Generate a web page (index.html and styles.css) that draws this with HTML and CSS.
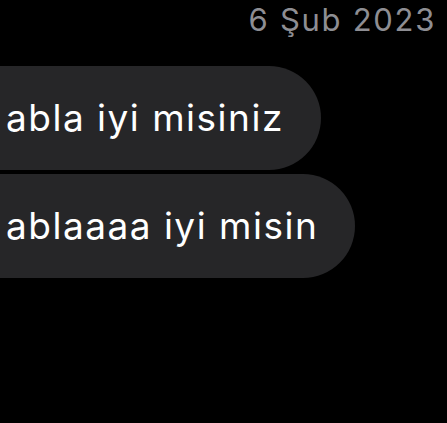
FILE: index.html
```html
<!DOCTYPE html>
<html lang="tr">
<head>
  <meta charset="UTF-8">
  <title>Mesajlar</title>
  <link rel="stylesheet" href="styles.css">
</head>
<body>

<div class="chat">
  <div class="chat-date">6 Şub 2023</div>
  <div class="msg-list">
    <div class="msg-bubble">abla iyi misiniz</div>
    <div class="msg-bubble">ablaaaa iyi misin</div>
  </div>
</div>

</body>
</html>
```

FILE: styles.css
```css
* {
  margin: 0;
  padding: 0;
  box-sizing: border-box;
}

body {
  background: #000000;
  font-family: Inter, "Noto Sans", sans-serif;
  width: 447px;
  height: 423px;
  overflow: hidden;
}

.chat {
  display: flex;
  flex-direction: column;
}

.chat-date {
  height: 66px;
  padding: 1px 11px 0 0;
  text-align: right;
  font-size: 31px;
  line-height: 38px;
  letter-spacing: 1.7px;
  color: #8e8e93;
}

.msg-list {
  display: flex;
  flex-direction: column;
  align-items: flex-start;
  gap: 4px;
}

.msg-bubble {
  height: 104px;
  padding: 0 37px 0 6px;
  background: #262628;
  border-radius: 0 52px 52px 0;
  color: #ffffff;
  font-size: 37px;
  line-height: 104px;
  letter-spacing: 1.5px;
  white-space: nowrap;
}
```
